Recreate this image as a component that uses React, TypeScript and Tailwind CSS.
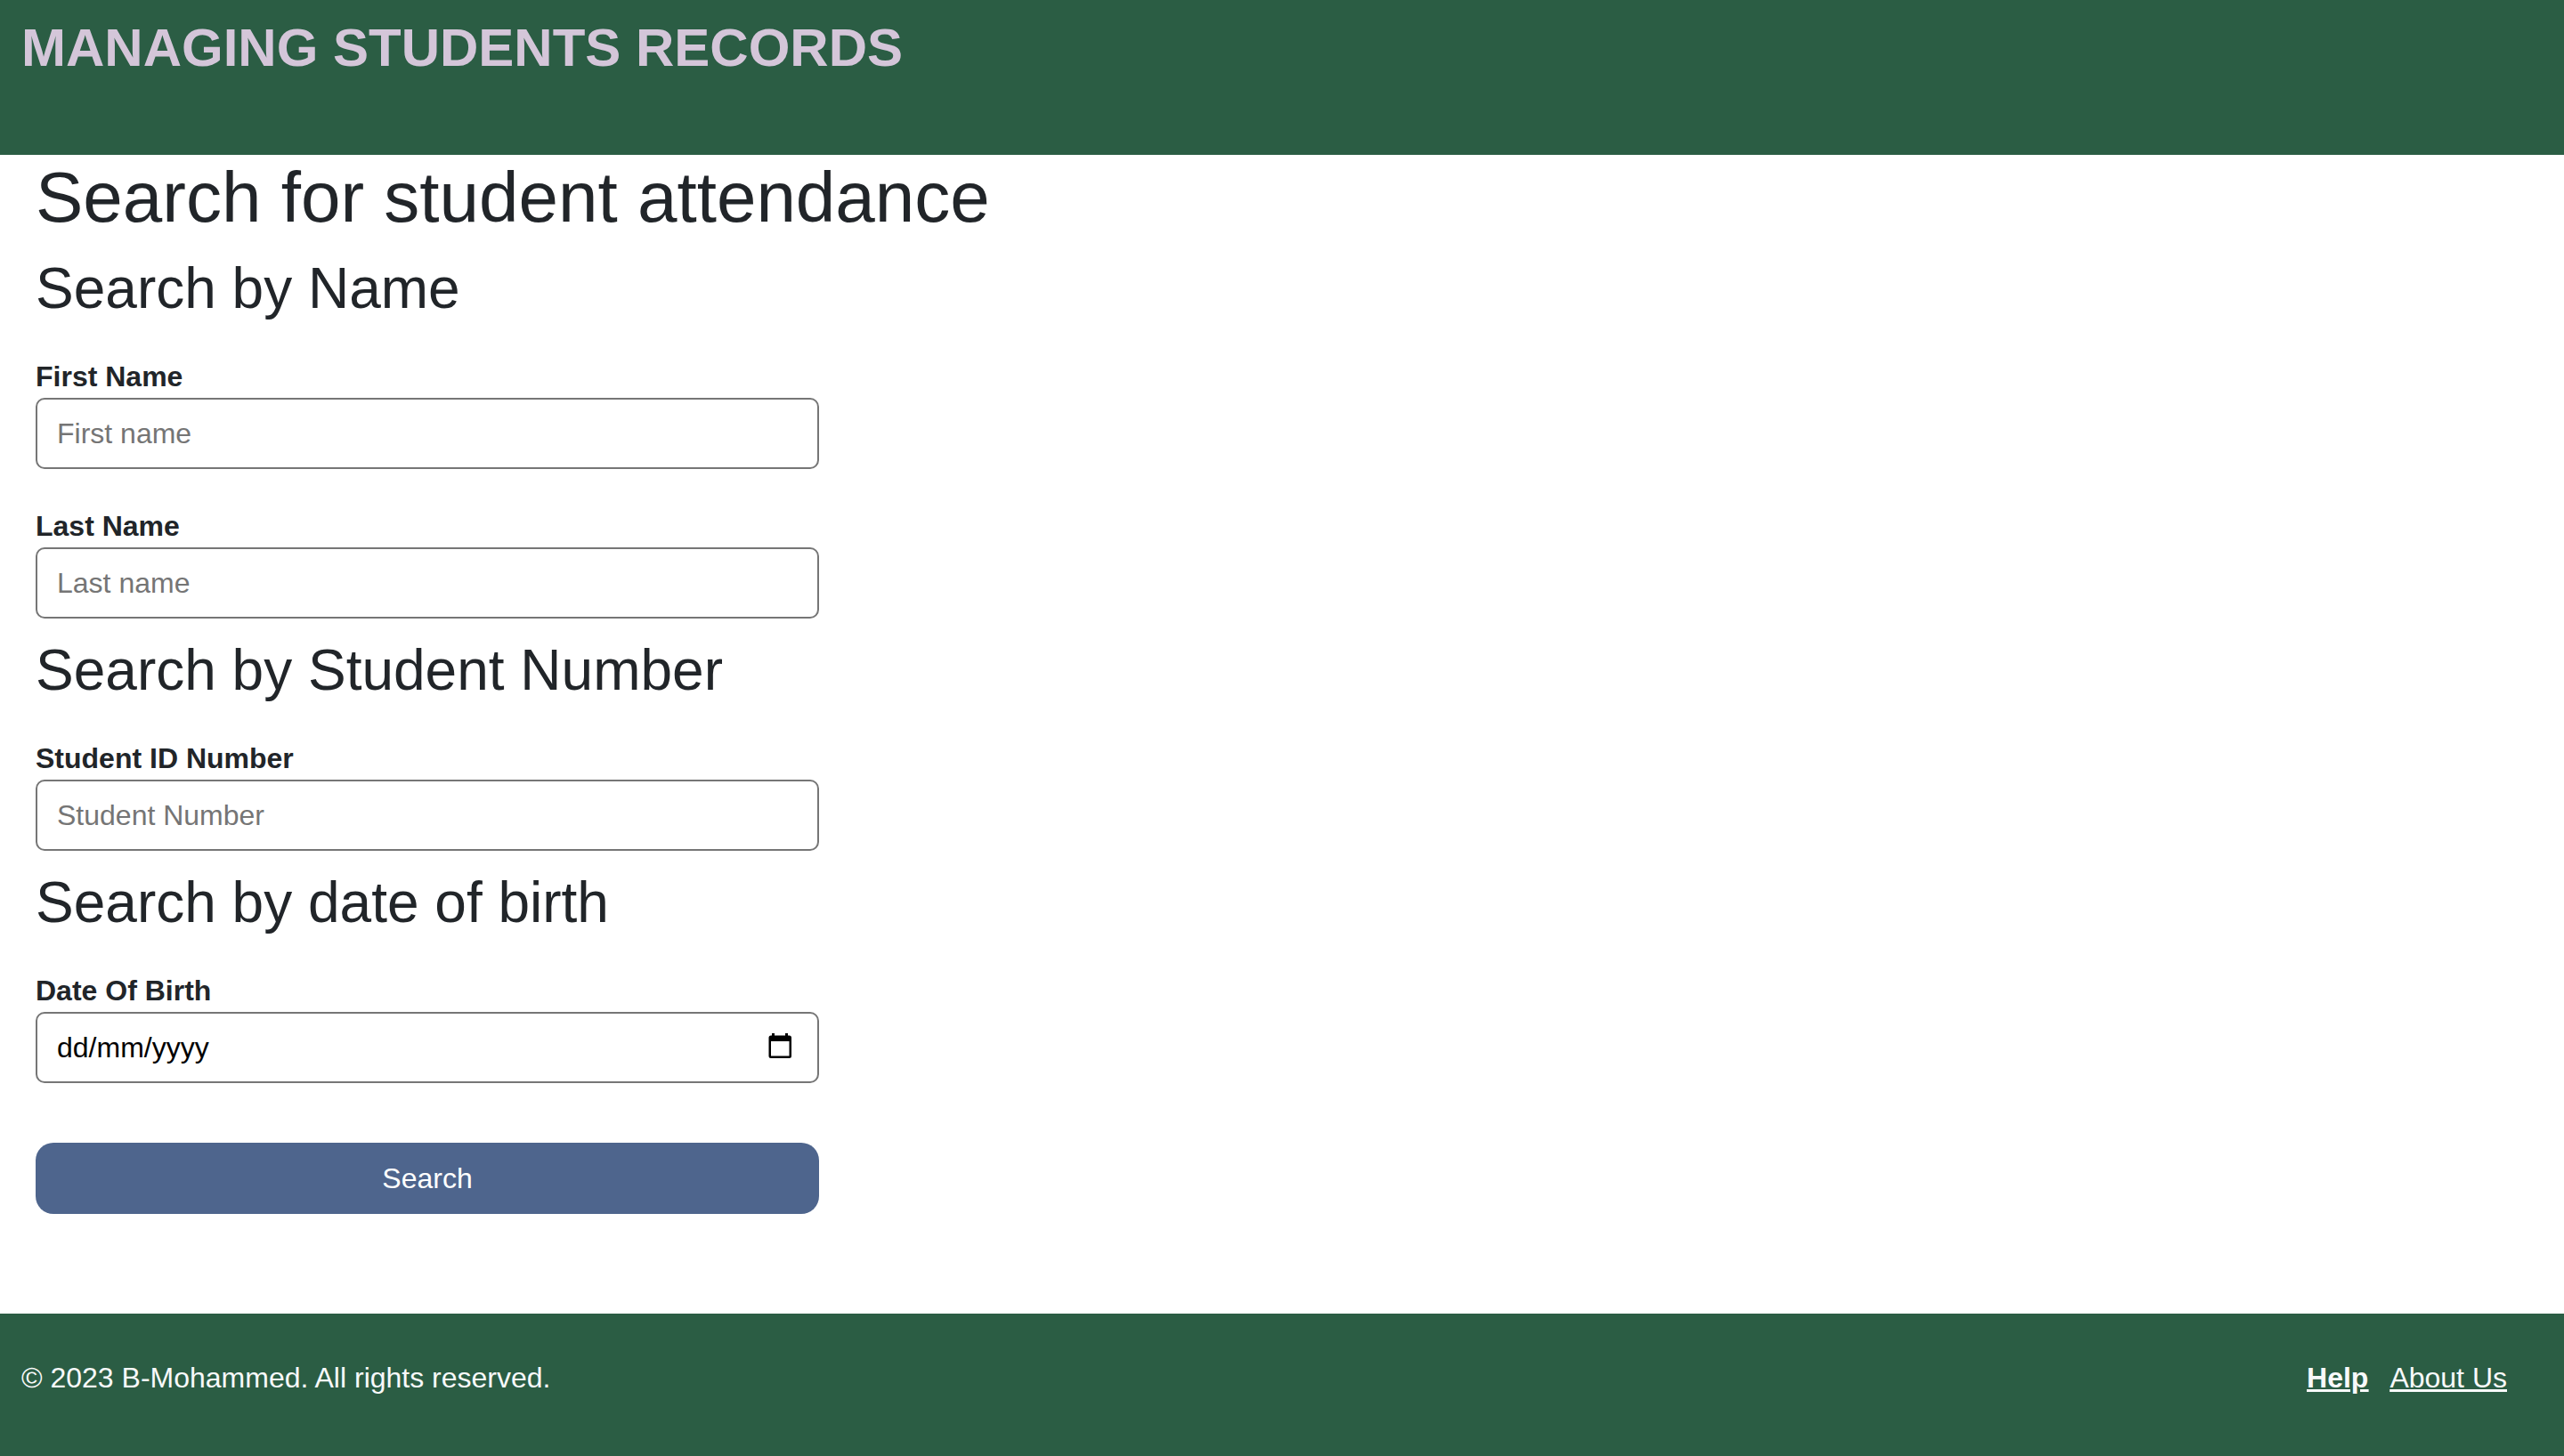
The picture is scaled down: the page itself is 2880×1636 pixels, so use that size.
import React from "react";

type FieldProps = {
  id: string;
  label: string;
  placeholder: string;
};

const inputClass =
  "block h-20 w-full rounded-[10px] border-2 border-[#767676] bg-white px-[22px] text-[32px] leading-[48px] outline-none";

function Field({ id, label, placeholder }: FieldProps) {
  return (
    <div>
      <label htmlFor={id} className="block font-bold">
        {label}
      </label>
      <input
        id={id}
        type="text"
        placeholder={placeholder}
        className={`${inputClass} text-black placeholder:text-[#757575]`}
      />
    </div>
  );
}

function DateField({ id, label, placeholder }: FieldProps) {
  return (
    <div>
      <label htmlFor={id} className="block font-bold">
        {label}
      </label>
      <div className="relative">
        <input
          id={id}
          type="text"
          placeholder={placeholder}
          className={`${inputClass} pr-20 text-black placeholder:text-black placeholder:opacity-100`}
        />
        <button
          type="button"
          aria-label="Open calendar"
          className="absolute inset-y-0 right-7 flex items-center"
        >
          <svg width="32" height="32" viewBox="0 0 32 32" fill="#000000" aria-hidden="true">
            <path
              fillRule="evenodd"
              d="M7 0h3v2.500h12V0h3v2.500h1.500A2.500 2.500 0 0 1 29 5v20.500a2.500 2.500 0 0 1-2.500 2.500H6a2.500 2.500 0 0 1-2.500-2.500V5A2.500 2.500 0 0 1 6 2.500h1zM6 9v16.500h20.500V9z"
            />
          </svg>
        </button>
      </div>
    </div>
  );
}

function SectionTitle({ children }: { children: React.ReactNode }) {
  return <h2 className="mb-9 text-[64px] leading-[77px]">{children}</h2>;
}

export default function App() {
  return (
    <div className="flex min-h-screen flex-col bg-white font-['Liberation_Sans',Arial,sans-serif] text-[32px] leading-[48px] text-[#212529]">
      <header className="bg-[#2b5d44] px-6 pt-4 pb-[82px]">
        <div className="text-[60px] leading-[76px] font-bold text-[#d4c6d9]">
          MANAGING STUDENTS RECORDS
        </div>
      </header>

      <main className="flex-1 px-10">
        <h1 className="mb-4 text-[80px] leading-[96px]">Search for student attendance</h1>
        <form className="w-full max-w-[880px]" onSubmit={(e) => e.preventDefault()}>
          <section className="mb-5">
            <SectionTitle>Search by Name</SectionTitle>
            <div className="flex flex-col gap-10">
              <Field id="first-name" label="First Name" placeholder="First name" />
              <Field id="last-name" label="Last Name" placeholder="Last name" />
            </div>
          </section>
          <section className="mb-5">
            <SectionTitle>Search by Student Number</SectionTitle>
            <Field id="student-id" label="Student ID Number" placeholder="Student Number" />
          </section>
          <section className="mb-[67px]">
            <SectionTitle>Search by date of birth</SectionTitle>
            <DateField id="dob" label="Date Of Birth" placeholder="dd/mm/yyyy" />
          </section>
          <button
            type="submit"
            className="block h-20 w-full rounded-[20px] bg-[#4e658d] text-center text-white"
          >
            Search
          </button>
        </form>
      </main>

      <footer className="flex items-center justify-between bg-[#2b5d44] pt-12 pr-16 pb-16 pl-6 text-[#f8f9fa]">
        <p>© 2023 B-Mohammed. All rights reserved.</p>
        <nav className="flex gap-6 underline">
          <a href="#help" className="font-bold">
            Help
          </a>
          <a href="#about">About Us</a>
        </nav>
      </footer>
    </div>
  );
}
